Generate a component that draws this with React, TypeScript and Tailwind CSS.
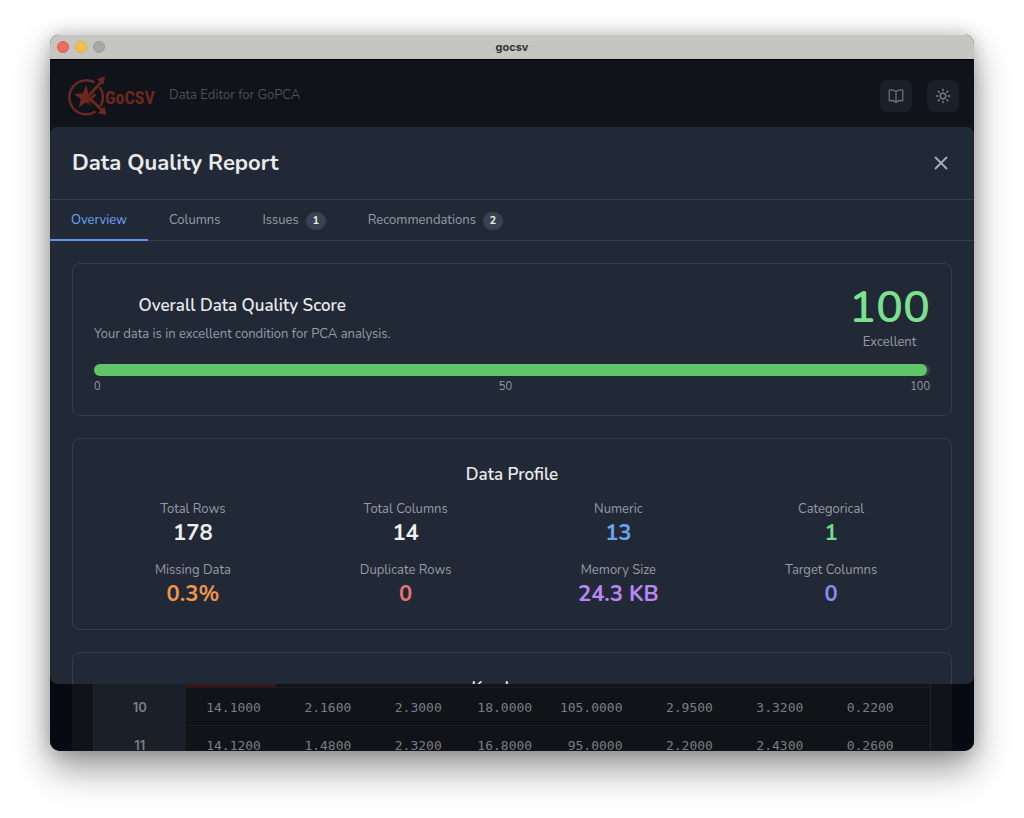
import React, { useState } from 'react';

const tabs = [
  { name: 'Overview' },
  { name: 'Columns' },
  { name: 'Issues', count: 1 },
  { name: 'Recommendations', count: 2 },
];

const profile = [
  { label: 'Total Rows', value: '178', color: 'text-[#eeeff1]' },
  { label: 'Total Columns', value: '14', color: 'text-[#eeeff1]' },
  { label: 'Numeric', value: '13', color: 'text-[#6ba3f5]' },
  { label: 'Categorical', value: '1', color: 'text-[#71dc86]' },
  { label: 'Missing Data', value: '0.3%', color: 'text-[#f0954a]' },
  { label: 'Duplicate Rows', value: '0', color: 'text-[#e97373]' },
  { label: 'Memory Size', value: '24.3 KB', color: 'text-[#b986f5]' },
  { label: 'Target Columns', value: '0', color: 'text-[#838df5]' },
];

const rows = [
  { id: 10, cells: ['14.1000', '2.1600', '2.3000', '18.0000', '105.0000', '2.9500', '3.3200', '0.2200'] },
  { id: 11, cells: ['14.1200', '1.4800', '2.3200', '16.8000', '95.0000', '2.2000', '2.4300', '0.2600'] },
];

function Logo() {
  return (
    <svg width="88" height="42" viewBox="0 0 88 42" role="img" aria-label="GoCSV" fill="none" stroke="#6c281e">
      <path d="M26.5 7.4A17 17 0 1 0 27.5 36.6" strokeWidth="2.4" />
      <path d="M31.6 12A17 17 0 0 1 32.6 30.8" strokeWidth="2.4" />
      <path
        d="M18 10L20.4 17.8L26 16L20.5 22L25.6 32.5L18 27.6L10.8 32.4L12.8 24L6.2 19L14.8 18.2Z"
        fill="#6c281e"
        stroke="none"
      />
      <path d="M20.4 18.4L30 8.4M20.5 27L30.5 36" stroke="#10141a" strokeWidth="1.4" />
      <path d="M19 22.6L34 6" strokeWidth="2.8" />
      <path d="M27.5 19.5L22 23.8L35 36.2" strokeWidth="2.8" />
      <path d="M37 1.4L35.4 9.8L28.8 4Z" fill="#6c281e" stroke="none" />
      <path d="M38.4 40L29.8 38L36.6 31.4Z" fill="#6c281e" stroke="none" />
      <text
        x="37"
        y="29"
        fill="#6c281e"
        stroke="none"
        className="font-['Liberation_Sans_Narrow','Roboto_Condensed','Liberation_Sans',sans-serif] text-[18px] font-bold"
      >
        GoCSV
      </text>
    </svg>
  );
}

function Icon({ d }: { d: string }) {
  return (
    <svg
      className="size-[18px]"
      viewBox="0 0 24 24"
      fill="none"
      stroke="currentColor"
      strokeWidth="1.7"
      strokeLinecap="round"
      strokeLinejoin="round"
      aria-hidden="true"
    >
      <path d={d} />
    </svg>
  );
}

const bookPath =
  'M12 6.042A8.967 8.967 0 0 0 6 3.75c-1.052 0-2.062.18-3 .512v14.25A8.987 8.987 0 0 1 6 18c2.305 0 4.408.867 6 2.292m0-14.25a8.966 8.966 0 0 1 6-2.292c1.052 0 2.062.18 3 .512v14.25A8.987 8.987 0 0 0 18 18a8.967 8.967 0 0 0-6 2.292m0-14.25v14.25';
const sunPath =
  'M12 3v2.25m6.364.386-1.591 1.591M21 12h-2.25m-.386 6.364-1.591-1.591M12 18.75V21m-4.773-4.227-1.591 1.591M5.25 12H3m4.227-4.773L5.636 5.636M15.75 12a3.75 3.75 0 1 1-7.5 0 3.75 3.75 0 0 1 7.5 0Z';

function Card({ children }: { children: React.ReactNode }) {
  return <section className="shrink-0 rounded-lg border border-[#353e4b] px-[21px] pb-[21px]">{children}</section>;
}

function Report() {
  const [active, setActive] = useState('Overview');
  return (
    <div
      role="dialog"
      aria-labelledby="report-title"
      className="relative z-10 flex min-h-0 flex-1 flex-col overflow-hidden rounded-lg bg-[#222936]"
    >
      <div className="flex h-[73px] shrink-0 items-center justify-between border-b border-[#353e4b] px-[22px]">
        <h2 id="report-title" className="text-[22px] leading-7 font-bold text-[#e9eaec]">
          Data Quality Report
        </h2>
        <button aria-label="Close" className="flex size-[22px] items-center justify-center text-[#a7adb8]">
          <svg className="size-[22px]" viewBox="0 0 24 24" fill="none" stroke="currentColor" strokeWidth="2" strokeLinecap="round" aria-hidden="true">
            <path d="M6 18L18 6M6 6l12 12" />
          </svg>
        </button>
      </div>
      <div role="tablist" className="flex h-[41px] shrink-0 border-b border-[#353e4b]">
        {tabs.map((tab) => (
          <button
            key={tab.name}
            role="tab"
            aria-selected={active === tab.name}
            onClick={() => setActive(tab.name)}
            className={
              active === tab.name
                ? '-mb-px flex items-center border-b-2 border-[#5b95f1] px-[21px] pt-0.5 text-[13px] text-[#6ba3f5]'
                : 'flex items-center px-[21px] pt-0.5 text-[13px] text-[#969ba5]'
            }
          >
            {tab.name}
            {tab.count !== undefined && (
              <span className="ml-[7px] flex h-[18px] w-5 items-center justify-center rounded-full bg-[#3a4150] text-[11px] font-bold text-[#e9eaec]">
                {tab.count}
              </span>
            )}
          </button>
        ))}
      </div>
      <div className="flex min-h-0 flex-1 flex-col gap-[22px] overflow-hidden px-[22px] pt-[22px]">
        <Card>
          <div className="flex items-start justify-between pt-5">
            <div className="pt-[10px]">
              <h3 className="text-center text-[17px] leading-6 font-semibold text-[#e9eaec]">Overall Data Quality Score</h3>
              <p className="mt-[6px] text-[13px] leading-5 text-[#969ba5]">Your data is in excellent condition for PCA analysis.</p>
            </div>
            <div className="text-center">
              <div className="text-[45px] leading-[48px] font-semibold text-[#7be08f]">100</div>
              <div className="text-[13px] leading-5 text-[#969ba5]">Excellent</div>
            </div>
          </div>
          <div className="mt-3 h-3 rounded-full bg-[#3a4150] pr-[3px]">
            <div className="h-3 rounded-full bg-[#60c468]" />
          </div>
          <div className="mt-[3px] flex justify-between text-[11px] leading-[15px] text-[#969ba5]">
            <span>0</span>
            <span>50</span>
            <span>100</span>
          </div>
        </Card>
        <Card>
          <h3 className="pt-6 text-center text-[17px] leading-6 font-semibold text-[#e9eaec]">Data Profile</h3>
          <dl className="mt-3 grid grid-cols-4 gap-x-[15px] gap-y-[13px] text-center">
            {profile.map((item) => (
              <div key={item.label}>
                <dt className="text-[13px] leading-5 text-[#969ba5]">{item.label}</dt>
                <dd className={`text-[22px] leading-7 font-bold ${item.color}`}>{item.value}</dd>
              </div>
            ))}
          </dl>
        </Card>
        <Card>
          <h3 className="pt-6 text-center text-[17px] leading-6 font-semibold text-[#e9eaec]">Key Issues</h3>
        </Card>
      </div>
    </div>
  );
}

export default function App() {
  return (
    <div className="flex h-screen min-h-[400px] flex-col bg-white px-[50px] pt-[34px] pb-[67px] font-['Nunito','Lato',sans-serif]">
      <div className="flex min-h-0 flex-1 flex-col overflow-hidden rounded-[10px] bg-[#101319] shadow-[0_18px_36px_rgba(0,0,0,0.4),0_0_18px_rgba(0,0,0,0.2)]">
        <div className="grid h-[26px] shrink-0 grid-cols-3 items-center border-t border-b border-t-[#dededc] border-b-black bg-[#c5c5c2] px-[7px]">
          <div className="flex gap-[6px]">
            <span className="size-3 rounded-full border border-[#d95b52] bg-[#ed6b60]" />
            <span className="size-3 rounded-full border border-[#e0ad42] bg-[#f5be4f]" />
            <span className="size-3 rounded-full border border-[#9a9b99] bg-[#a8a9a7]" />
          </div>
          <span className="text-center font-['Inter',sans-serif] text-[11px] font-bold text-[#353535]">gocsv</span>
        </div>
        <header className="flex h-[67px] shrink-0 items-center justify-between pt-1 pr-[15px] pl-[18px]">
          <div className="flex items-center gap-[13px]">
            <Logo />
            <span className="text-[13px] text-[#4d5056]">Data Editor for GoPCA</span>
          </div>
          <div className="flex gap-[15px]">
            <button aria-label="Documentation" className="flex size-8 items-center justify-center rounded-lg bg-[#1b1f27] text-[#6f7277]">
              <Icon d={bookPath} />
            </button>
            <button aria-label="Toggle theme" className="flex size-8 items-center justify-center rounded-lg bg-[#1b1f27] text-[#85878b]">
              <Icon d={sunPath} />
            </button>
          </div>
        </header>
        <Report />
        <div className="-mt-2 h-[75px] shrink-0 overflow-hidden bg-[#070a12] px-[22px]">
          <div className="h-full bg-[#101419] px-[21px]">
            <table className="w-full table-fixed border-collapse border-x border-[#21252b] font-['DejaVu_Sans_Mono',monospace] text-[13px] text-[#7b7d81]">
              <colgroup>
                <col className="w-[11%]" />
                {rows[0].cells.map((_, i) => (
                  <col key={i} className="w-[10.8%]" />
                ))}
                <col />
              </colgroup>
              <tbody>
                <tr className="h-[11px] border-b border-[#1a1d23]">
                  <td className="bg-[#1b1f27]" />
                  <td className="bg-[#3f1512]" />
                  <td colSpan={8} />
                </tr>
                {rows.map((row) => (
                  <tr key={row.id} className="h-[38px] border-b border-[#1a1d23]">
                    <th scope="row" className="bg-[#1b1f27] p-0 pt-1 font-['Inter',sans-serif] font-semibold">
                      {row.id}
                    </th>
                    {row.cells.map((cell, i) => (
                      <td key={i} className="p-0 pt-[3px] pr-[15px] text-right">
                        {cell}
                      </td>
                    ))}
                    <td className="p-0" />
                  </tr>
                ))}
              </tbody>
            </table>
          </div>
        </div>
      </div>
    </div>
  );
}
